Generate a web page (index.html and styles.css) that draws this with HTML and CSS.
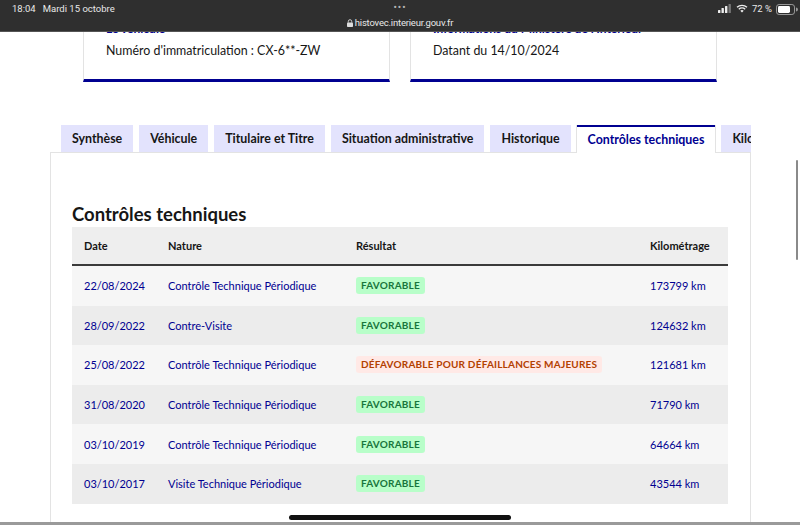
FILE: index.html
```html
<!DOCTYPE html>
<html lang="fr">
<head>
    <meta charset="UTF-8">
    <meta name="viewport" content="width=device-width, initial-scale=1.0">
    <title>HistoVec - Contrôles techniques</title>
    <link rel="stylesheet" href="styles.css">
</head>
<body>
    <!-- Barre d'état du navigateur -->
    <div class="status-bar">
        <div class="status-left">18:04&nbsp;&nbsp; Mardi 15 octobre</div>
        <div class="status-center">
            <div class="dots">•••</div>
            <div class="url">
                <svg class="lock" width="6" height="8" viewBox="0 0 6 8"><rect x="0" y="3.5" width="6" height="4.5" rx="0.8" fill="#ddd"/><path d="M1.3 3.6V2.4a1.7 1.7 0 0 1 3.4 0v1.2" fill="none" stroke="#ddd" stroke-width="0.9"/></svg>
                histovec.interieur.gouv.fr
            </div>
        </div>
        <div class="status-right">
            <svg width="14" height="9" viewBox="0 0 14 9"><rect x="0" y="6" width="2.4" height="3" rx="0.5" fill="#eee"/><rect x="3.5" y="4" width="2.4" height="5" rx="0.5" fill="#eee"/><rect x="7" y="2" width="2.4" height="7" rx="0.5" fill="#eee"/><rect x="10.5" y="0" width="2.4" height="9" rx="0.5" fill="#777"/></svg>
            <svg width="12" height="9" viewBox="0 0 12 9"><path d="M6 8.6 4.3 6.8a2.4 2.4 0 0 1 3.4 0Z" fill="#eee"/><path d="M2.8 5.3a4.6 4.6 0 0 1 6.4 0" fill="none" stroke="#eee" stroke-width="1.3"/><path d="M1 3.3a7.2 7.2 0 0 1 10 0" fill="none" stroke="#eee" stroke-width="1.3"/></svg>
            <span>72 %</span>
            <svg width="22" height="11" viewBox="0 0 22 11"><rect x="0.5" y="0.5" width="18" height="10" rx="2.6" fill="none" stroke="#999" stroke-width="1"/><rect x="2" y="2" width="12" height="7" rx="1.4" fill="#fff"/><path d="M20 3.6v3.8a1.6 1.6 0 0 0 0-3.8Z" fill="#999"/></svg>
        </div>
    </div>

    <div class="viewport">
        <!-- Cartes d'en-tête -->
        <div class="cards">
            <div class="card">
                <h3 class="card-title">Le véhicule</h3>
                <p class="card-text">Numéro d'immatriculation : CX-6**-ZW</p>
            </div>
            <div class="card">
                <h3 class="card-title">Informations du Ministère de l'Intérieur</h3>
                <p class="card-text">Datant du 14/10/2024</p>
            </div>
        </div>

        <div class="tabs-wrap">
            <ul class="tabs">
                <li class="tab">Synthèse</li>
                <li class="tab">Véhicule</li>
                <li class="tab">Titulaire et Titre</li>
                <li class="tab">Situation administrative</li>
                <li class="tab">Historique</li>
                <li class="tab active">Contrôles techniques</li>
                <li class="tab">Kilométrage</li>
            </ul>

            <div class="panel">
                <h2 class="panel-title">Contrôles techniques</h2>
                <table class="ct-table">
                    <thead>
                        <tr>
                            <th class="col-date">Date</th>
                            <th class="col-nature">Nature</th>
                            <th class="col-result">Résultat</th>
                            <th class="col-km">Kilométrage</th>
                        </tr>
                    </thead>
                    <tbody>
                        <tr>
                            <td>22/08/2024</td>
                            <td>Contrôle Technique Périodique</td>
                            <td><span class="badge ok">Favorable</span></td>
                            <td>173799 km</td>
                        </tr>
                        <tr>
                            <td>28/09/2022</td>
                            <td>Contre-Visite</td>
                            <td><span class="badge ok">Favorable</span></td>
                            <td>124632 km</td>
                        </tr>
                        <tr>
                            <td>25/08/2022</td>
                            <td>Contrôle Technique Périodique</td>
                            <td><span class="badge ko">Défavorable pour défaillances majeures</span></td>
                            <td>121681 km</td>
                        </tr>
                        <tr>
                            <td>31/08/2020</td>
                            <td>Contrôle Technique Périodique</td>
                            <td><span class="badge ok">Favorable</span></td>
                            <td>71790 km</td>
                        </tr>
                        <tr>
                            <td>03/10/2019</td>
                            <td>Contrôle Technique Périodique</td>
                            <td><span class="badge ok">Favorable</span></td>
                            <td>64664 km</td>
                        </tr>
                        <tr>
                            <td>03/10/2017</td>
                            <td>Visite Technique Périodique</td>
                            <td><span class="badge ok">Favorable</span></td>
                            <td>43544 km</td>
                        </tr>
                    </tbody>
                </table>
            </div>
        </div>

        <div class="scroll-thumb"></div>
        <div class="home-bar"></div>
        <div class="bottom-edge"></div>
    </div>
</body>
</html>
```

FILE: styles.css
```css
/* Base */
html, body {
    margin: 0;
    padding: 0;
}

body {
    width: 800px;
    height: 525px;
    overflow: hidden;
    background: #fff;
    font-family: 'Lato', 'Noto Sans', sans-serif;
    color: #161616;
}

/* Browser status bar */
.status-bar {
    position: relative;
    z-index: 2;
    height: 31px;
    background: #2f2f2f;
    color: #e8e8e8;
    font-family: 'Roboto', 'Liberation Sans', sans-serif;
    font-size: 9.5px;
    display: grid;
    grid-template-columns: 1fr auto 1fr;
    box-shadow: 0 1px 0 #555;
}

.status-left {
    padding: 3px 0 0 12px;
}

.status-center {
    display: flex;
    flex-direction: column;
    align-items: center;
}

.dots {
    font-size: 10px;
    letter-spacing: 1px;
    color: #b5b5b5;
    line-height: 12px;
    padding-top: 2px;
}

.url {
    display: flex;
    align-items: center;
    gap: 2px;
    margin-top: 2px;
    font-size: 9.5px;
    letter-spacing: -0.2px;
    line-height: 13px;
}

.status-right {
    display: flex;
    justify-content: flex-end;
    align-items: flex-start;
    gap: 4px;
    padding: 3px 2px 0 0;
}

.status-right svg {
    margin-top: 1px;
}

/* Page area under the status bar */
.viewport {
    position: relative;
    height: 494px;
    overflow: hidden;
}

/* Header cards */
.cards {
    display: flex;
    gap: 20px;
    padding-left: 83px;
    margin-top: -20px;
}

.card {
    width: 307px;
    height: 71px;
    border: 1px solid #e3e3e3;
    border-top: none;
    border-bottom: 3px solid #000091;
    box-sizing: border-box;
    padding: 0 22px;
}

.card-title {
    margin: 0;
    height: 22px;
    padding-top: 11px;
    box-sizing: border-box;
    line-height: 14px;
    font-size: 12px;
    font-weight: 700;
    color: #000091;
    white-space: nowrap;
    overflow: hidden;
}

.card-text {
    margin: 10px 0 0;
    font-size: 12.4px;
    line-height: 16px;
    color: #161616;
}

/* Tabs */
.tabs-wrap {
    margin: 43px 0 0 50px;
    width: 701px;
}

.tabs {
    list-style: none;
    margin: 0;
    padding: 0 0 0 11px;
    display: flex;
    gap: 6px;
    overflow: hidden;
    height: 28px;
    position: relative;
    z-index: 1;
}

.tab {
    flex: none;
    height: 27px;
    line-height: 27px;
    padding: 0 11px;
    background: #e3e3fd;
    font-size: 12.4px;
    font-weight: 700;
    white-space: nowrap;
}

.tab.active {
    background: #fff;
    color: #000091;
    height: 28px;
    line-height: 26px;
    border-top: 2px solid #000091;
    box-sizing: border-box;
    box-shadow: -1px 0 0 #e3e3e3, 1px 0 0 #e3e3e3;
}

.panel {
    border: 1px solid #e3e3e3;
    border-bottom: none;
    margin-top: -1px;
    height: 400px;
    padding: 0 21px;
}

.panel-title {
    margin: 49px 0 0;
    font-size: 18.5px;
    line-height: 25px;
    font-weight: 700;
}

/* Table */
.ct-table {
    width: 656px;
    border-collapse: collapse;
    font-size: 11px;
}

.ct-table th {
    background: #eee;
    height: 37px;
    text-align: left;
    font-weight: 700;
    color: #161616;
    border-bottom: 2px solid #3a3a3a;
    padding: 0 0 0 12px;
}

.ct-table td {
    height: 39.6px;
    padding: 0 0 0 12px;
    color: #000091;
}

.ct-table tbody tr:nth-child(odd) td {
    background: #f6f6f6;
}

.ct-table tbody tr:nth-child(even) td {
    background: #ececec;
}

.col-date { width: 72px; }
.col-nature { width: 176px; }
.col-result { width: 282px; }

.badge {
    display: inline-block;
    padding: 0 5px;
    height: 17px;
    line-height: 17px;
    border-radius: 3px;
    font-size: 10px;
    font-weight: 700;
    text-transform: uppercase;
    letter-spacing: 0.2px;
}

.badge.ok {
    background: #b8fec9;
    color: #18753c;
}

.badge.ko {
    background: #ffe9e6;
    color: #b34000;
}

/* Overlays from the tablet chrome */
.scroll-thumb {
    position: absolute;
    right: 2px;
    top: 129px;
    width: 2px;
    height: 100px;
    background: #8a8a8a;
    border-radius: 1px;
}

.home-bar {
    position: absolute;
    left: 289px;
    top: 484px;
    width: 222px;
    height: 5px;
    border-radius: 3px;
    background: #111;
}

.bottom-edge {
    position: absolute;
    left: 0;
    right: 0;
    top: 491px;
    height: 3px;
    background: #9a9a9a;
}
```
